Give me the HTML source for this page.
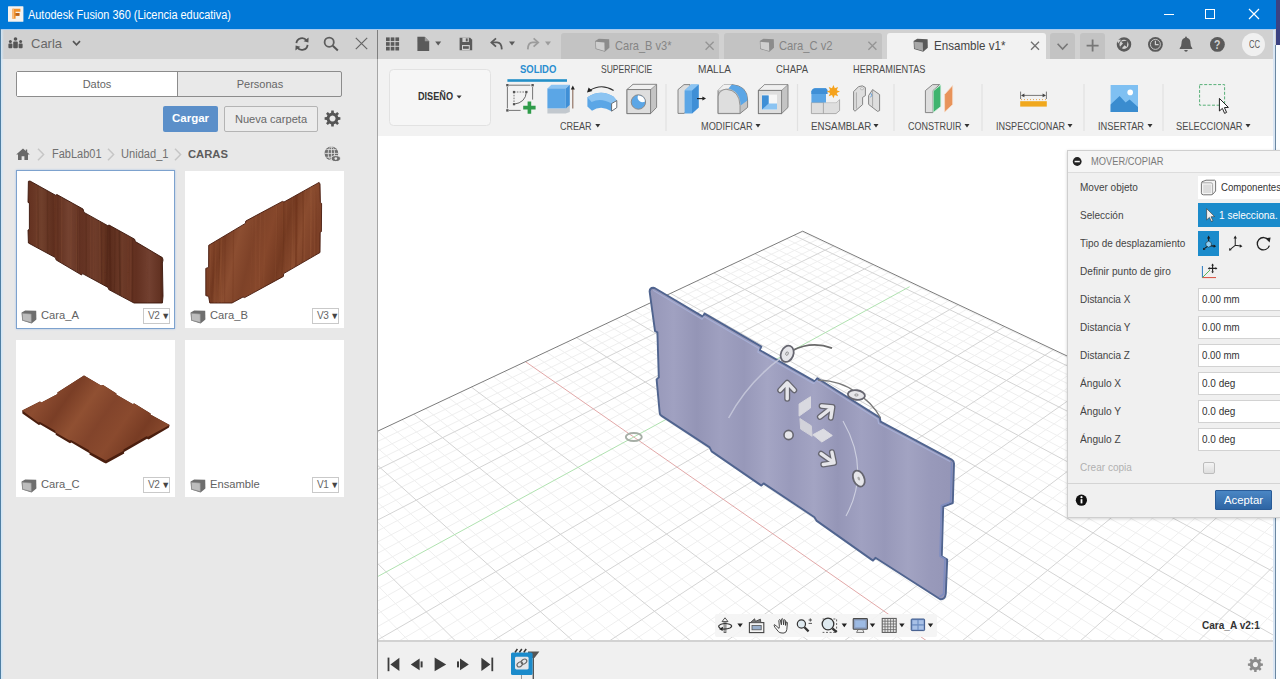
<!DOCTYPE html>
<html lang="es"><head><meta charset="utf-8"><title>Autodesk Fusion 360</title>
<style>*{box-sizing:border-box;margin:0;padding:0}
html,body{width:1280px;height:679px;overflow:hidden;background:#fff;font-family:"Liberation Sans",sans-serif;font-size:12px;color:#3c3c3c}
.abs{position:absolute}
svg{position:absolute;overflow:visible}
.nw{white-space:nowrap}
#titlebar{left:0;top:0;width:1276px;height:29px;background:#0078d7}
#titlebar .t{left:28px;top:7px;color:#fff;font-size:12px;white-space:nowrap}
#lp{left:0;top:59px;width:378px;height:620px;background:#e8e8e8}
#lph{left:0;top:29px;width:1276px;height:30px;background:#d1d1d1}
#ribbon{left:378px;top:59px;width:898px;height:77px;background:#f2f2f2}
#vp{left:378px;top:136px;width:898px;height:505px;background:#fff;overflow:hidden}
#tl{left:378px;top:640px;width:898px;height:39px;background:#f0f0f0;border-top:2px solid #d2d2d2}
#rightstrip{left:1276px;top:0;width:4px;height:679px;background:#fff}
</style></head>
<body>
<div id="titlebar" class="abs"></div>
<span class="abs nw" style="left:28.0px;top:7.6px;font-size:12px;line-height:14px;color:#fff;transform-origin:0 50%;transform:scaleX(0.911);">Autodesk Fusion 360 (Licencia educativa)</span>
<div id="lph" class="abs"></div>
<div id="lp" class="abs"></div>
<div id="ribbon" class="abs"></div>
<div id="rightstrip" class="abs"></div>
<svg style="left:8px;top:37px" width="15" height="12" viewBox="0 0 15 12"><g fill="#555">
<circle cx="2.4" cy="4.4" r="1.5"/><rect x="0.4" y="6.6" width="4" height="4.6" rx="1"/>
<circle cx="7.5" cy="2" r="1.8"/><rect x="5.2" y="4.6" width="4.6" height="6.6" rx="1"/>
<circle cx="12.6" cy="4.4" r="1.5"/><rect x="10.6" y="6.6" width="4" height="4.6" rx="1"/></g></svg>
<span class="abs nw" style="left:31px;top:36px;font-size:13px;color:#686868">Carla</span>
<svg style="left:72px;top:40px" width="9" height="7" viewBox="0 0 9 7"><path d="M1 1.2 L4.5 4.8 L8 1.2" fill="none" stroke="#555" stroke-width="1.7"/></svg>
<svg style="left:294px;top:36px" width="16" height="16" viewBox="0 0 16 16"><g fill="none" stroke="#555" stroke-width="1.8">
<path d="M2.4 7.2 A5.6 5.6 0 0 1 12.6 4.6"/><path d="M13.6 8.8 A5.6 5.6 0 0 1 3.4 11.4"/></g>
<path d="M14.6 1.4 L14.4 6.6 L9.6 5.2 Z" fill="#555"/><path d="M1.4 14.6 L1.6 9.4 L6.4 10.8 Z" fill="#555"/></svg>
<svg style="left:323px;top:36px" width="16" height="16" viewBox="0 0 16 16"><circle cx="6.2" cy="6.2" r="4.6" fill="none" stroke="#5e5e5e" stroke-width="1.8"/><path d="M9.8 9.8 L14.8 14.4" stroke="#555" stroke-width="2"/></svg>
<svg style="left:355px;top:37px" width="13" height="13" viewBox="0 0 13 13"><path d="M0.8 0.8 L12.2 12.2 M12.2 0.8 L0.8 12.2" stroke="#666" stroke-width="1.2"/></svg>
<div class="abs" style="left:16px;top:71px;width:326px;height:26px;border:1px solid #8c8c8c;border-radius:2px;background:#e9e9e9"></div>
<div class="abs" style="left:17px;top:72px;width:161px;height:24px;background:#fff;border-right:1px solid #8c8c8c;text-align:center;line-height:24px;font-size:11px;color:#666">Datos</div>
<div class="abs" style="left:179px;top:72px;width:162px;height:24px;text-align:center;line-height:24px;font-size:11px;color:#666">Personas</div>
<div class="abs" style="left:163px;top:106px;width:55px;height:26px;background:#5b8fc9;border-radius:2px;color:#fff;font-weight:bold;font-size:11.5px;text-align:center;line-height:25px">Cargar</div>
<div class="abs" style="left:224px;top:106px;width:94px;height:26px;background:#ececec;border:1px solid #b4b4b4;border-radius:2px;color:#686868;font-size:11.1px;text-align:center;line-height:24px">Nueva carpeta</div>
<svg style="left:324px;top:110px" width="17" height="17" viewBox="0 0 17 17"><path d="M14.26,7.12 L16.40,7.25 L16.40,9.75 L14.26,9.88 L13.55,11.59 L14.97,13.20 L13.20,14.97 L11.59,13.55 L9.88,14.26 L9.75,16.40 L7.25,16.40 L7.12,14.26 L5.41,13.55 L3.80,14.97 L2.03,13.20 L3.45,11.59 L2.74,9.88 L0.60,9.75 L0.60,7.25 L2.74,7.12 L3.45,5.41 L2.03,3.80 L3.80,2.03 L5.41,3.45 L7.12,2.74 L7.25,0.60 L9.75,0.60 L9.88,2.74 L11.59,3.45 L13.20,2.03 L14.97,3.80 L13.55,5.41Z M8.50 5.46 a3.04 3.04 0 1 0 0.01 0Z" fill="#555" fill-rule="evenodd"/><circle cx="8.5" cy="8.5" r="4.6" fill="none" stroke="#555" stroke-width="1.6"/></svg>
<svg style="left:15px;top:147px" width="16" height="14" viewBox="0 0 16 14"><path d="M8 1.6 L1.2 7.6 L3 7.6 L3 13 L6.6 13 L6.6 9.2 L9.4 9.2 L9.4 13 L13 13 L13 7.6 L14.8 7.6 L12.2 5.2 L12.2 2.6 L10.8 2.6 L10.8 4 Z" fill="#686868"/></svg>
<svg style="left:37px;top:148px" width="8" height="13" viewBox="0 0 8 13"><path d="M1 0.8 L6.6 6.5 L1 12.2" fill="none" stroke="#c6c6c6" stroke-width="1.5"/></svg>
<svg style="left:107px;top:148px" width="8" height="13" viewBox="0 0 8 13"><path d="M1 0.8 L6.6 6.5 L1 12.2" fill="none" stroke="#c6c6c6" stroke-width="1.5"/></svg>
<svg style="left:174px;top:148px" width="8" height="13" viewBox="0 0 8 13"><path d="M1 0.8 L6.6 6.5 L1 12.2" fill="none" stroke="#c6c6c6" stroke-width="1.5"/></svg>
<span class="abs nw" style="left:51.5px;top:147.2px;font-size:12px;line-height:14px;color:#707070;transform-origin:0 50%;transform:scaleX(0.916);">FabLab01</span>
<span class="abs nw" style="left:121.0px;top:147.2px;font-size:12px;line-height:14px;color:#707070;transform-origin:0 50%;transform:scaleX(0.925);">Unidad_1</span>
<span class="abs nw" style="left:187.5px;top:147.2px;font-size:11.5px;line-height:14px;color:#5c5c5c;font-weight:bold;transform-origin:0 50%;transform:scaleX(0.978);">CARAS</span>
<svg style="left:324px;top:146px" width="17" height="17" viewBox="0 0 17 17"><circle cx="7.4" cy="7.4" r="6.8" fill="#6e6e6e"/>
<path d="M7.4 0.6 V14.2 M0.6 7.4 H14.2 M2.4 3.6 H12.4 M2.4 11.2 H12.4" stroke="#e8e8e8" stroke-width="0.8" fill="none"/><ellipse cx="7.4" cy="7.4" rx="3.2" ry="6.8" fill="none" stroke="#e8e8e8" stroke-width="0.8"/>
<ellipse cx="11.8" cy="12.6" rx="4.6" ry="3" fill="#6e6e6e" stroke="#e8e8e8" stroke-width="1"/><circle cx="11.8" cy="12.6" r="1.3" fill="#e8e8e8"/></svg>
<div class="abs" style="left:16px;top:170px;width:159px;height:159px;background:#fff;border:1px solid #7da2ce;box-shadow:0 0 2px #a8c4e6"></div><svg style="left:21px;top:310px" width="16" height="14" viewBox="0 0 16 14"><path d="M0.6 2.6 L4.2 0.4 L15.2 0.8 L15.4 9.6 L10.6 13.4 L1.2 10.6 Z" fill="#6e6e6e"/><path d="M1.2 3.2 L10.2 4 L10.4 12.6 L1.6 10.2 Z" fill="#bdbdbd"/><path d="M1.2 3.2 L10.2 4 L10.4 12.6 L1.6 10.2 Z" fill="none" stroke="#8a8a8a" stroke-width="0.6"/></svg><span class="abs nw" style="left:41px;top:309px;font-size:11.2px;color:#626262">Cara_A</span><div class="abs nw" style="left:143px;top:308px;width:27px;height:16px;border:1px solid #c9c9c9;background:#fff;font-size:10px;color:#666;line-height:14px;padding-left:4px;letter-spacing:-0.5px">V2<span style="font-size:9px;color:#444;margin-left:2px">&#9660;</span></div>
<div class="abs" style="left:185px;top:171px;width:159px;height:157px;background:#fff"></div><svg style="left:190px;top:310px" width="16" height="14" viewBox="0 0 16 14"><path d="M0.6 2.6 L4.2 0.4 L15.2 0.8 L15.4 9.6 L10.6 13.4 L1.2 10.6 Z" fill="#6e6e6e"/><path d="M1.2 3.2 L10.2 4 L10.4 12.6 L1.6 10.2 Z" fill="#bdbdbd"/><path d="M1.2 3.2 L10.2 4 L10.4 12.6 L1.6 10.2 Z" fill="none" stroke="#8a8a8a" stroke-width="0.6"/></svg><span class="abs nw" style="left:210px;top:309px;font-size:11.2px;color:#626262">Cara_B</span><div class="abs nw" style="left:312px;top:308px;width:27px;height:16px;border:1px solid #c9c9c9;background:#fff;font-size:10px;color:#666;line-height:14px;padding-left:4px;letter-spacing:-0.5px">V3<span style="font-size:9px;color:#444;margin-left:2px">&#9660;</span></div>
<div class="abs" style="left:16px;top:340px;width:159px;height:157px;background:#fff"></div><svg style="left:21px;top:479px" width="16" height="14" viewBox="0 0 16 14"><path d="M0.6 2.6 L4.2 0.4 L15.2 0.8 L15.4 9.6 L10.6 13.4 L1.2 10.6 Z" fill="#6e6e6e"/><path d="M1.2 3.2 L10.2 4 L10.4 12.6 L1.6 10.2 Z" fill="#bdbdbd"/><path d="M1.2 3.2 L10.2 4 L10.4 12.6 L1.6 10.2 Z" fill="none" stroke="#8a8a8a" stroke-width="0.6"/></svg><span class="abs nw" style="left:41px;top:478px;font-size:11.2px;color:#626262">Cara_C</span><div class="abs nw" style="left:143px;top:477px;width:27px;height:16px;border:1px solid #c9c9c9;background:#fff;font-size:10px;color:#666;line-height:14px;padding-left:4px;letter-spacing:-0.5px">V2<span style="font-size:9px;color:#444;margin-left:2px">&#9660;</span></div>
<div class="abs" style="left:185px;top:340px;width:159px;height:157px;background:#fff"></div><svg style="left:190px;top:479px" width="16" height="14" viewBox="0 0 16 14"><path d="M0.6 2.6 L4.2 0.4 L15.2 0.8 L15.4 9.6 L10.6 13.4 L1.2 10.6 Z" fill="#6e6e6e"/><path d="M1.2 3.2 L10.2 4 L10.4 12.6 L1.6 10.2 Z" fill="#bdbdbd"/><path d="M1.2 3.2 L10.2 4 L10.4 12.6 L1.6 10.2 Z" fill="none" stroke="#8a8a8a" stroke-width="0.6"/></svg><span class="abs nw" style="left:210px;top:478px;font-size:11.2px;color:#626262">Ensamble</span><div class="abs nw" style="left:312px;top:477px;width:27px;height:16px;border:1px solid #c9c9c9;background:#fff;font-size:10px;color:#666;line-height:14px;padding-left:4px;letter-spacing:-0.5px">V1<span style="font-size:9px;color:#444;margin-left:2px">&#9660;</span></div>
<svg style="left:0;top:0" width="378" height="679" viewBox="0 0 378 679"><defs><linearGradient id="wA" x1="0" y1="0" x2="1" y2="0"><stop offset="0.000" stop-color="#63301f"/><stop offset="0.100" stop-color="#70402c"/><stop offset="0.200" stop-color="#5c2c1c"/><stop offset="0.300" stop-color="#744230"/><stop offset="0.400" stop-color="#633222"/><stop offset="0.500" stop-color="#6e3c2a"/><stop offset="0.600" stop-color="#5a2c1c"/><stop offset="0.700" stop-color="#6c3a28"/><stop offset="0.800" stop-color="#623020"/><stop offset="0.900" stop-color="#724030"/><stop offset="1.000" stop-color="#5e2e1e"/></linearGradient><linearGradient id="wB" x1="0" y1="0" x2="1" y2="0.25"><stop offset="0.000" stop-color="#7c4027"/><stop offset="0.125" stop-color="#88492d"/><stop offset="0.250" stop-color="#763c23"/><stop offset="0.375" stop-color="#8c4e31"/><stop offset="0.500" stop-color="#7e4228"/><stop offset="0.625" stop-color="#86472b"/><stop offset="0.750" stop-color="#743a21"/><stop offset="0.875" stop-color="#8a4c2f"/><stop offset="1.000" stop-color="#7c4027"/></linearGradient><linearGradient id="wC" x1="0" y1="0.2" x2="1" y2="0.6"><stop offset="0.000" stop-color="#80422a"/><stop offset="0.143" stop-color="#8c4c30"/><stop offset="0.286" stop-color="#7a3e26"/><stop offset="0.429" stop-color="#905032"/><stop offset="0.571" stop-color="#82442b"/><stop offset="0.714" stop-color="#8a4a2e"/><stop offset="0.857" stop-color="#783c24"/><stop offset="1.000" stop-color="#8a4b2e"/></linearGradient><clipPath id="cA"><path d="M28.4 181.3 L30 181 L55.5 195.2 L57 194.6 L83 209 L84 212.4 L107.8 225.7 L109 225 L134.6 239.2 L135.4 241.6 L162.4 257.6 L163 260 L162.4 263 L163 296 L162.4 303 L134 303 L108.8 289.6 L108 287.4 L82.5 273.6 L81.6 275 L56.2 260 L55.4 257.6 L28.4 243 L28 230 L29.4 229.4 L29.4 203 L28 202.4 Z"/></clipPath><clipPath id="cB"><path d="M319.1 182.4 L320 184 L320.4 202.6 L321.6 203.4 L321.4 231.6 L320.2 232.4 L320 252.5 L283.6 273.6 L283.4 276.4 L244.6 297.6 L243 297 L232 303 L209.8 303 L208.6 296.4 L205.8 295.6 L205.8 268.4 L208.6 267.4 L208.7 245.3 L245.4 223.4 L245.8 221 L282.4 201.4 L284 202 Z"/></clipPath></defs><path d="M28.4 181.3 L30 181 L55.5 195.2 L57 194.6 L83 209 L84 212.4 L107.8 225.7 L109 225 L134.6 239.2 L135.4 241.6 L162.4 257.6 L163 260 L162.4 263 L163 296 L162.4 303 L134 303 L108.8 289.6 L108 287.4 L82.5 273.6 L81.6 275 L56.2 260 L55.4 257.6 L28.4 243 L28 230 L29.4 229.4 L29.4 203 L28 202.4 Z" fill="url(#wA)" stroke="#3a150a" stroke-width="0.9"/><path d="M319.1 182.4 L320 184 L320.4 202.6 L321.6 203.4 L321.4 231.6 L320.2 232.4 L320 252.5 L283.6 273.6 L283.4 276.4 L244.6 297.6 L243 297 L232 303 L209.8 303 L208.6 296.4 L205.8 295.6 L205.8 268.4 L208.6 267.4 L208.7 245.3 L245.4 223.4 L245.8 221 L282.4 201.4 L284 202 Z" fill="url(#wB)" stroke="#45190c" stroke-width="0.9"/><path d="M22.2 410.5 L40 401.6 L41.4 402.4 L57.6 394 L57.4 392.6 L84 375.5 L101 385.4 L103 385 L116.4 393.4 L116.2 394.6 L132.6 404 L134.4 403.6 L150.6 413.4 L150.4 414.6 L169.6 425 L169 427.6 L148.6 439.4 L147 438.8 L124 452 L124.2 453.4 L106 463.4 L103.6 462.6 L89.4 454.6 L89.6 453.2 L71.4 442.6 L70 443.2 L55.6 434.8 L55.8 433.4 L40.4 424.4 L38.8 425 L22.4 413.6 Z" fill="#4a1e0e"/><path d="M22.2 410.5 L40 401.6 L41.4 402.4 L57.6 394 L57.4 392.6 L84 375.5 L101 385.4 L103 385 L116.4 393.4 L116.2 394.6 L132.6 404 L134.4 403.6 L150.6 413.4 L150.4 414.6 L169.6 425 L148 436.8 L146.4 436.2 L123.4 449.4 L123.6 450.8 L105.8 460.6 L89 451.6 L89.2 450.2 L71 440 L69.6 440.6 L55.2 432.2 L55.4 430.8 L40 422 L38.4 422.6 Z" fill="url(#wC)"/><g clip-path="url(#cA)"><path d="M71.7 178 q-0.4 60 -1.4 128" stroke="#8a5238" stroke-width="1.6" opacity="0.20" fill="none"/><path d="M106.7 178 q-1.9 60 -0.2 128" stroke="#8a5238" stroke-width="0.7" opacity="0.20" fill="none"/><path d="M85.3 178 q1.8 60 0.4 128" stroke="#3e1a0c" stroke-width="1.3" opacity="0.19" fill="none"/><path d="M107.0 178 q1.9 60 -1.4 128" stroke="#3e1a0c" stroke-width="1.6" opacity="0.24" fill="none"/><path d="M47.5 178 q0.3 60 0.2 128" stroke="#3e1a0c" stroke-width="1.4" opacity="0.20" fill="none"/><path d="M105.1 178 q-0.5 60 0.1 128" stroke="#8a5238" stroke-width="0.7" opacity="0.19" fill="none"/><path d="M55.8 178 q1.1 60 -0.1 128" stroke="#7c4630" stroke-width="1.7" opacity="0.26" fill="none"/><path d="M61.5 178 q0.8 60 -0.8 128" stroke="#8a5238" stroke-width="1.3" opacity="0.30" fill="none"/><path d="M146.1 178 q-0.8 60 1.4 128" stroke="#7c4630" stroke-width="0.7" opacity="0.27" fill="none"/><path d="M130.2 178 q1.7 60 -0.2 128" stroke="#8a5238" stroke-width="1.8" opacity="0.20" fill="none"/><path d="M103.3 178 q-0.6 60 -0.4 128" stroke="#4a2012" stroke-width="1.2" opacity="0.36" fill="none"/><path d="M37.3 178 q1.8 60 -0.1 128" stroke="#3e1a0c" stroke-width="1.4" opacity="0.19" fill="none"/><path d="M122.7 178 q-0.9 60 -0.3 128" stroke="#7c4630" stroke-width="1.4" opacity="0.18" fill="none"/><path d="M90.3 178 q0.4 60 -0.0 128" stroke="#8a5238" stroke-width="0.9" opacity="0.24" fill="none"/><path d="M127.7 178 q-0.4 60 1.1 128" stroke="#7c4630" stroke-width="0.7" opacity="0.28" fill="none"/><path d="M102.2 178 q1.3 60 1.1 128" stroke="#8a5238" stroke-width="0.9" opacity="0.27" fill="none"/><path d="M76.4 178 q1.8 60 -1.0 128" stroke="#7c4630" stroke-width="0.8" opacity="0.23" fill="none"/><path d="M59.5 178 q1.3 60 -1.0 128" stroke="#7c4630" stroke-width="0.9" opacity="0.21" fill="none"/><path d="M100.2 178 q1.8 60 0.6 128" stroke="#4a2012" stroke-width="1.2" opacity="0.32" fill="none"/><path d="M119.3 178 q-0.2 60 1.1 128" stroke="#3e1a0c" stroke-width="1.7" opacity="0.33" fill="none"/><path d="M103.5 178 q-0.4 60 -1.2 128" stroke="#7c4630" stroke-width="1.4" opacity="0.19" fill="none"/><path d="M37.1 178 q-0.2 60 -1.2 128" stroke="#8a5238" stroke-width="1.3" opacity="0.20" fill="none"/><path d="M104.5 178 q1.8 60 0.3 128" stroke="#3e1a0c" stroke-width="0.7" opacity="0.23" fill="none"/><path d="M78.8 178 q1.8 60 0.3 128" stroke="#4a2012" stroke-width="1.2" opacity="0.21" fill="none"/><path d="M93.9 178 q-0.1 60 -0.6 128" stroke="#7c4630" stroke-width="0.8" opacity="0.34" fill="none"/><path d="M127.9 178 q1.3 60 -1.0 128" stroke="#7c4630" stroke-width="0.6" opacity="0.39" fill="none"/><path d="M99.3 178 q0.8 60 1.2 128" stroke="#8a5238" stroke-width="1.5" opacity="0.25" fill="none"/><path d="M114.8 178 q0.8 60 -0.7 128" stroke="#3e1a0c" stroke-width="1.0" opacity="0.22" fill="none"/><path d="M132.2 178 q0.5 60 0.3 128" stroke="#4a2012" stroke-width="1.5" opacity="0.35" fill="none"/><path d="M54.3 178 q1.3 60 0.7 128" stroke="#8a5238" stroke-width="0.9" opacity="0.29" fill="none"/><path d="M76.0 178 q2.0 60 0.9 128" stroke="#3e1a0c" stroke-width="1.2" opacity="0.22" fill="none"/><path d="M109.7 178 q-0.2 60 1.3 128" stroke="#4a2012" stroke-width="1.8" opacity="0.39" fill="none"/><path d="M77.2 178 q-1.6 60 -0.1 128" stroke="#8a5238" stroke-width="1.0" opacity="0.29" fill="none"/><path d="M161.0 178 q-0.1 60 0.5 128" stroke="#3e1a0c" stroke-width="1.6" opacity="0.20" fill="none"/></g><g clip-path="url(#cB)"><path d="M281.9 178 q1.7 60 -1.0 128" stroke="#965636" stroke-width="1.3" opacity="0.19" fill="none"/><path d="M297.1 178 q-2.5 60 -0.2 128" stroke="#6a3018" stroke-width="1.6" opacity="0.24" fill="none"/><path d="M291.7 178 q1.3 60 -3.3 128" stroke="#5e2a14" stroke-width="0.8" opacity="0.18" fill="none"/><path d="M310.8 178 q0.7 60 -1.6 128" stroke="#a0603e" stroke-width="1.3" opacity="0.34" fill="none"/><path d="M222.4 178 q-2.9 60 -0.8 128" stroke="#a0603e" stroke-width="1.6" opacity="0.17" fill="none"/><path d="M292.4 178 q-0.4 60 -0.5 128" stroke="#a0603e" stroke-width="1.8" opacity="0.19" fill="none"/><path d="M233.7 178 q0.0 60 -0.9 128" stroke="#6a3018" stroke-width="1.1" opacity="0.26" fill="none"/><path d="M302.4 178 q2.5 60 -2.6 128" stroke="#5e2a14" stroke-width="1.2" opacity="0.27" fill="none"/><path d="M310.7 178 q2.0 60 -0.5 128" stroke="#965636" stroke-width="0.8" opacity="0.18" fill="none"/><path d="M264.2 178 q1.7 60 -1.6 128" stroke="#965636" stroke-width="1.7" opacity="0.18" fill="none"/><path d="M220.7 178 q0.3 60 -2.7 128" stroke="#5e2a14" stroke-width="1.3" opacity="0.26" fill="none"/><path d="M296.5 178 q2.3 60 -3.8 128" stroke="#5e2a14" stroke-width="0.9" opacity="0.16" fill="none"/><path d="M215.5 178 q0.4 60 -1.0 128" stroke="#965636" stroke-width="1.9" opacity="0.24" fill="none"/><path d="M276.3 178 q1.2 60 -2.2 128" stroke="#a0603e" stroke-width="1.3" opacity="0.25" fill="none"/><path d="M315.1 178 q2.5 60 -0.4 128" stroke="#6a3018" stroke-width="0.9" opacity="0.24" fill="none"/><path d="M253.2 178 q-0.3 60 -3.7 128" stroke="#965636" stroke-width="0.9" opacity="0.16" fill="none"/><path d="M283.0 178 q2.4 60 -3.4 128" stroke="#5e2a14" stroke-width="1.6" opacity="0.28" fill="none"/><path d="M220.9 178 q2.8 60 -3.1 128" stroke="#a0603e" stroke-width="1.9" opacity="0.23" fill="none"/><path d="M261.5 178 q-2.0 60 -2.3 128" stroke="#a0603e" stroke-width="1.3" opacity="0.22" fill="none"/><path d="M227.1 178 q-2.4 60 -2.5 128" stroke="#6a3018" stroke-width="1.1" opacity="0.24" fill="none"/><path d="M287.0 178 q-1.0 60 -1.5 128" stroke="#965636" stroke-width="1.3" opacity="0.16" fill="none"/><path d="M320.2 178 q2.8 60 -3.6 128" stroke="#a0603e" stroke-width="1.0" opacity="0.16" fill="none"/><path d="M295.9 178 q1.5 60 -0.7 128" stroke="#6a3018" stroke-width="1.8" opacity="0.29" fill="none"/><path d="M315.6 178 q-2.1 60 -0.3 128" stroke="#965636" stroke-width="1.4" opacity="0.29" fill="none"/><path d="M214.6 178 q1.8 60 -3.3 128" stroke="#5e2a14" stroke-width="1.9" opacity="0.20" fill="none"/><path d="M206.0 178 q1.8 60 -3.7 128" stroke="#5e2a14" stroke-width="1.8" opacity="0.16" fill="none"/><path d="M305.8 178 q-2.9 60 -0.0 128" stroke="#965636" stroke-width="1.2" opacity="0.33" fill="none"/><path d="M277.4 178 q0.2 60 -3.0 128" stroke="#5e2a14" stroke-width="0.8" opacity="0.18" fill="none"/><path d="M209.9 178 q2.6 60 -1.5 128" stroke="#a0603e" stroke-width="1.3" opacity="0.19" fill="none"/><path d="M256.6 178 q-1.4 60 -0.8 128" stroke="#a0603e" stroke-width="2.0" opacity="0.16" fill="none"/></g></svg>
<div class="abs" style="left:0;top:29px;width:1px;height:650px;background:#4f7fa3"></div>
<div class="abs" style="left:1px;top:30px;width:3px;height:649px;background:linear-gradient(90deg,#cfe6f8,rgba(220,232,240,0))"></div>
<div class="abs" style="left:377px;top:59px;width:1px;height:620px;background:#a6a6a6"></div>
<div class="abs" style="left:377px;top:30px;width:1px;height:29px;background:#7e7e7e"></div>
<div class="abs" style="left:1px;top:29px;width:1273px;height:1px;background:#a9cbee"></div>
<div class="abs" style="left:561px;top:33px;width:158px;height:26px;background:#c3c3c3;border-radius:3px 3px 0 0"></div>
<div class="abs" style="left:724px;top:33px;width:158px;height:26px;background:#c3c3c3;border-radius:3px 3px 0 0"></div>
<div class="abs" style="left:887px;top:33px;width:159px;height:26px;background:#f2f2f2;border-radius:3px 3px 0 0"></div>
<div class="abs" style="left:1050px;top:33px;width:25px;height:26px;background:#c3c3c3;border-radius:3px 3px 0 0"></div>
<div class="abs" style="left:1080px;top:33px;width:25px;height:26px;background:#c3c3c3;border-radius:3px 3px 0 0"></div>
<span class="abs nw" style="left:614.5px;top:38.0px;font-size:13px;line-height:16px;color:#858585;transform-origin:0 50%;transform:scaleX(0.850);">Cara_B v3*</span>
<span class="abs nw" style="left:779.0px;top:38.0px;font-size:13px;line-height:16px;color:#858585;transform-origin:0 50%;transform:scaleX(0.861);">Cara_C v2</span>
<span class="abs nw" style="left:933.5px;top:38.0px;font-size:13px;line-height:16px;color:#444;transform-origin:0 50%;transform:scaleX(0.891);">Ensamble v1*</span>
<div class="abs" style="left:1242px;top:33px;width:23px;height:23px;border-radius:12px;background:#f0f0f0"></div>
<span class="abs nw" style="left:1248.5px;top:38.5px;font-size:10px;line-height:12px;color:#555;transform-origin:0 50%;transform:scaleX(0.762);">CC</span>
<svg style="left:0;top:0" width="1280" height="140" viewBox="0 0 1280 140"><rect x="386.0" y="37.4" width="3.7" height="3.7" fill="#5a5a5a"/><rect x="386.0" y="42.1" width="3.7" height="3.7" fill="#5a5a5a"/><rect x="386.0" y="46.8" width="3.7" height="3.7" fill="#5a5a5a"/><rect x="390.7" y="37.4" width="3.7" height="3.7" fill="#5a5a5a"/><rect x="390.7" y="42.1" width="3.7" height="3.7" fill="#5a5a5a"/><rect x="390.7" y="46.8" width="3.7" height="3.7" fill="#5a5a5a"/><rect x="395.4" y="37.4" width="3.7" height="3.7" fill="#5a5a5a"/><rect x="395.4" y="42.1" width="3.7" height="3.7" fill="#5a5a5a"/><rect x="395.4" y="46.8" width="3.7" height="3.7" fill="#5a5a5a"/><path d="M417.4 36.8 H424.6 L429.2 41.4 V51 H417.4 Z" fill="#5a5a5a"/><path d="M424.8 36.8 V41.2 H429.2 Z" fill="#9a9a9a"/><path d="M435.2 41.6 H441.2 L438.2 45.4 Z" fill="#5a5a5a"/><path d="M459.6 37.8 H470.2 L472.2 39.8 V50.2 H459.6 Z" fill="#5a5a5a"/><rect x="462.4" y="37.8" width="6.4" height="4.2" fill="#d1d1d1"/><rect x="465.8" y="38.4" width="1.9" height="3" fill="#5a5a5a"/><rect x="462" y="45" width="7.8" height="5.2" fill="#d1d1d1"/><rect x="463" y="46.2" width="5.8" height="2.6" fill="#5a5a5a"/><path d="M491.6 42.4 H497 Q501.6 42.6 501.8 49.4" fill="none" stroke="#5a5a5a" stroke-width="1.8"/><path d="M496 38.4 L491.4 42.4 L496 46.6" fill="none" stroke="#5a5a5a" stroke-width="1.8"/><path d="M509 41.6 H515 L512 45.4 Z" fill="#5a5a5a"/><path d="M538 42.4 H532.6 Q528 42.6 527.8 49.4" fill="none" stroke="#9c9c9c" stroke-width="1.8"/><path d="M533.6 38.4 L538.2 42.4 L533.6 46.6" fill="none" stroke="#9c9c9c" stroke-width="1.8"/><path d="M545 41.6 H551 L548 45.4 Z" fill="#9c9c9c"/><path d="M595.2 41.0 l3.6 -2.2 l10.4 0.4 l0.2 8.6 l-4.6 4 l-9.2 -2.8 Z" fill="#8c8c8c"/><path d="M595.8 41.8 l8.6 0.8 l0.2 8.4 l-8.4 -2.4 Z" fill="#cfcfcf"/><path d="M759.8 41.0 l3.6 -2.2 l10.4 0.4 l0.2 8.6 l-4.6 4 l-9.2 -2.8 Z" fill="#8c8c8c"/><path d="M760.4 41.8 l8.6 0.8 l0.2 8.4 l-8.4 -2.4 Z" fill="#cfcfcf"/><path d="M913.6 41.0 l3.6 -2.2 l10.4 0.4 l0.2 8.6 l-4.6 4 l-9.2 -2.8 Z" fill="#5a5a5a"/><path d="M914.2 41.8 l8.6 0.8 l0.2 8.4 l-8.4 -2.4 Z" fill="#a8a8a8"/><path d="M705.6 41.8 l8 8 m0 -8 l-8 8" stroke="#949494" stroke-width="1.3" fill="none"/><path d="M868.4 41.8 l8 8 m0 -8 l-8 8" stroke="#949494" stroke-width="1.3" fill="none"/><path d="M1031.0 41.8 l8 8 m0 -8 l-8 8" stroke="#707070" stroke-width="1.3" fill="none"/><path d="M1057.6 43.8 L1062.6 49 L1067.6 43.8" fill="none" stroke="#777" stroke-width="1.6"/><path d="M1086.6 45.6 H1098.6 M1092.6 39.6 V51.6" stroke="#777" stroke-width="1.8"/><circle cx="1124" cy="44.4" r="5.9" fill="none" stroke="#5a5a5a" stroke-width="2.7"/><path d="M1127.6 40.6 L1126.8 47 L1124.6 45.2 L1121.6 48.4 L1120 46.8 L1123 43.6 L1121 41.6 Z" fill="#5a5a5a"/><path d="M1116.4 39.6 l4.6 0.2 l-2.8 3.6 Z" fill="#d1d1d1"/><circle cx="1155.4" cy="44.4" r="7.4" fill="#5a5a5a"/><circle cx="1155.4" cy="44.4" r="5" fill="none" stroke="#d1d1d1" stroke-width="0.9"/><path d="M1155.4 40.8 V44.6 H1158.6" stroke="#d1d1d1" stroke-width="1.2" fill="none"/><path d="M1186 36.6 q0.9 0 0.9 1.2 q3.6 0.9 3.6 5.4 q0 3.4 1.8 5 v0.9 h-12.6 v-0.9 q1.8 -1.6 1.8 -5 q0 -4.5 3.6 -5.4 q0 -1.2 0.9 -1.2 Z" fill="#5a5a5a"/><path d="M1184.2 50 h3.6 q-0.2 1.8 -1.8 1.8 q-1.6 0 -1.8 -1.8Z" fill="#5a5a5a"/><circle cx="1217.4" cy="44.4" r="7.4" fill="#5a5a5a"/><rect x="389.5" y="69.5" width="101" height="56" rx="4" fill="#f6f6f6" stroke="#e2e2e2"/><path d="M456.6 95.4 h5 l-2.5 3.2 Z" fill="#333"/><rect x="507.4" y="79.2" width="59.6" height="2.6" fill="#2490c8"/><rect x="665.4" y="84" width="1.2" height="47" fill="#e1e1e1"/><rect x="796.9" y="84" width="1.2" height="47" fill="#e1e1e1"/><rect x="893.4" y="84" width="1.2" height="47" fill="#e1e1e1"/><rect x="981.4" y="84" width="1.2" height="47" fill="#e1e1e1"/><rect x="1083.4" y="84" width="1.2" height="47" fill="#e1e1e1"/><rect x="1162.4" y="84" width="1.2" height="47" fill="#e1e1e1"/><path d="M595.3 124 h5 l-2.5 3.4 Z" fill="#333"/><path d="M755.5 124 h5 l-2.5 3.4 Z" fill="#333"/><path d="M873.5 124 h5 l-2.5 3.4 Z" fill="#333"/><path d="M964.5 124 h5 l-2.5 3.4 Z" fill="#333"/><path d="M1067.5 124 h5 l-2.5 3.4 Z" fill="#333"/><path d="M1147.5 124 h5 l-2.5 3.4 Z" fill="#333"/><path d="M1245.5 124 h5 l-2.5 3.4 Z" fill="#333"/></svg>
<span class="abs nw" style="left:1214.2px;top:37.6px;font-size:12px;line-height:14px;color:#d1d1d1;font-weight:bold;transform-origin:0 50%;transform:scaleX(0.873);">?</span>
<span class="abs nw" style="left:417.5px;top:89.7px;font-size:10.5px;line-height:13px;color:#333;font-weight:bold;transform-origin:0 50%;transform:scaleX(0.869);">DISEÑO</span>
<span class="abs nw" style="left:519.5px;top:62.9px;font-size:10.5px;line-height:13px;color:#2a8ed0;font-weight:bold;transform-origin:0 50%;transform:scaleX(0.902);">SOLIDO</span>
<span class="abs nw" style="left:601.2px;top:62.9px;font-size:10.5px;line-height:13px;color:#4a4a4a;transform-origin:0 50%;transform:scaleX(0.814);">SUPERFICIE</span>
<span class="abs nw" style="left:697.5px;top:62.9px;font-size:10.5px;line-height:13px;color:#4a4a4a;transform-origin:0 50%;transform:scaleX(0.958);">MALLA</span>
<span class="abs nw" style="left:775.5px;top:62.9px;font-size:10.5px;line-height:13px;color:#4a4a4a;transform-origin:0 50%;transform:scaleX(0.904);">CHAPA</span>
<span class="abs nw" style="left:853.0px;top:62.9px;font-size:10.5px;line-height:13px;color:#4a4a4a;transform-origin:0 50%;transform:scaleX(0.877);">HERRAMIENTAS</span>
<span class="abs nw" style="left:560.0px;top:121.3px;font-size:10px;line-height:12px;color:#4a4a4a;transform-origin:0 50%;transform:scaleX(0.903);">CREAR</span>
<span class="abs nw" style="left:701.0px;top:121.3px;font-size:10px;line-height:12px;color:#4a4a4a;transform-origin:0 50%;transform:scaleX(0.918);">MODIFICAR</span>
<span class="abs nw" style="left:810.5px;top:121.3px;font-size:10px;line-height:12px;color:#4a4a4a;transform-origin:0 50%;transform:scaleX(0.978);">ENSAMBLAR</span>
<span class="abs nw" style="left:907.5px;top:121.3px;font-size:10px;line-height:12px;color:#4a4a4a;transform-origin:0 50%;transform:scaleX(0.900);">CONSTRUIR</span>
<span class="abs nw" style="left:995.5px;top:121.3px;font-size:10px;line-height:12px;color:#4a4a4a;transform-origin:0 50%;transform:scaleX(0.906);">INSPECCIONAR</span>
<span class="abs nw" style="left:1098.0px;top:121.3px;font-size:10px;line-height:12px;color:#4a4a4a;transform-origin:0 50%;transform:scaleX(0.927);">INSERTAR</span>
<span class="abs nw" style="left:1176.0px;top:121.3px;font-size:10px;line-height:12px;color:#4a4a4a;transform-origin:0 50%;transform:scaleX(0.928);">SELECCIONAR</span>
<svg style="left:0;top:0" width="1280" height="140" viewBox="0 0 1280 140"><path d="M509 85.2 H530.4 M507.4 87 V108.4 M532.6 87 V99.6 M509 110.4 H520.6" stroke="#666" stroke-width="0.9" fill="none"/><rect x="506.2" y="84.0" width="2.4" height="2.4" fill="#555"/><rect x="531.4" y="84.0" width="2.4" height="2.4" fill="#555"/><rect x="506.2" y="109.2" width="2.4" height="2.4" fill="#555"/><path d="M514 92 H526 M514 92 V104" stroke="#777" stroke-width="1" stroke-dasharray="1.6 1.2" fill="none"/><path d="M526.4 92 Q525.6 102.6 514 104.2" stroke="#666" stroke-width="1" fill="none"/><rect x="512.9" y="90.9" width="2.2" height="2.2" fill="#555"/><rect x="525.3" y="90.9" width="2.2" height="2.2" fill="#555"/><rect x="512.9" y="103.1" width="2.2" height="2.2" fill="#555"/><path d="M523.2 107.6 H535.6 M529.4 101.4 V113.8" stroke="#2f9c4a" stroke-width="3.6"/><path d="M547.4 108.4 H565.6 L569.8 105 V112 L565.6 113.4 H547.4 Z" fill="#c2c8ce"/><path d="M547.4 88.4 L551.4 84.8 H569.8 L565.8 88.4 Z" fill="#8cc4f2"/><rect x="547.4" y="88.4" width="18.4" height="20" fill="#5ba6e6"/><path d="M565.8 88.4 L569.8 84.8 V105 L565.8 108.4 Z" fill="#3f8fd6"/><path d="M572.8 88.6 V108.6" stroke="#8a6a5a" stroke-width="1.1"/><path d="M570.8 89.6 L572.8 85.4 L574.8 89.6 Z" fill="#222"/><path d="M587.4 97.2 Q601 88.6 613.4 96.6 L616.8 100.6 L616.8 107.6 L611.6 111.2 Q601 104.4 592 110.8 L587.4 106.4 Z" fill="#5ba6e6"/><path d="M587.4 97.2 Q601 88.6 613.4 96.6 L616.8 100.6 L611.6 103.6 Q601 97.4 591.6 102 Z" fill="#8cc4f2"/><path d="M611.6 103.6 L616.8 100.6 V107.6 L611.6 111.2 Z" fill="#fff" stroke="#555" stroke-width="0.8"/><path d="M589.6 90.6 Q601.4 83 613.6 90.4" stroke="#333" stroke-width="1.2" fill="none"/><path d="M587 92.6 L588.6 87.4 L592.4 91 Z" fill="#222"/><path d="M627 89.6 L633 84.4 H656.6 V107.4 L650.6 113.6 H627 Z" fill="#c4c4c4" stroke="#7a7a7a" stroke-width="0.9"/><path d="M627 89.6 L633 84.4 H656.6 L650.6 89.6 Z" fill="#f0f0f0" stroke="#7a7a7a" stroke-width="0.6"/><rect x="627" y="89.6" width="23.6" height="24" fill="#dedede" stroke="#7a7a7a" stroke-width="0.9"/><circle cx="638.4" cy="102" r="7.2" fill="#5ba6e6" stroke="#8a8a8a" stroke-width="1"/><path d="M638 95.4 A6.6 6.6 0 0 1 645 101.6 A5 5 0 0 1 638 95.4Z" fill="#fff"/><path d="M678 89.6 L684 84.6 H690 V108.6 L684 113.4 H678 Z" fill="#dedede" stroke="#7a7a7a" stroke-width="0.9"/><path d="M684.6 90.4 L691 84.6 H698.6 V107.6 L692 113.4 H684.6 Z" fill="#5ba6e6"/><path d="M692 90.4 L698.6 84.6 V107.6 L692 113.4 Z" fill="#3f8fd6"/><path d="M684.6 90.4 L691 84.6 H698.6 L692 90.4 Z" fill="#8cc4f2"/><path d="M697 98.6 H703" stroke="#222" stroke-width="1.1"/><path d="M702.4 96.6 L706 98.6 L702.4 100.6 Z" fill="#222"/><path d="M718 90.6 L724 84.6 H732 Q747.6 86 747.6 100 V107.4 L740 113.6 H718 Z" fill="#c4c4c4" stroke="#7a7a7a" stroke-width="0.9"/><path d="M718 90.6 L724 84.6 H732 L729 88 Q722 89.6 718 90.6Z" fill="#f0f0f0"/><path d="M718.2 113.4 V96 Q719.4 90 726 89.2 Q739.6 90.4 740 105.6 V113.4 Z" fill="#dedede" stroke="#7a7a7a" stroke-width="0.7"/><path d="M731.6 84.8 Q747.4 86 747.4 100.6 L740.6 105.6 Q740.2 91.6 728.6 88.6 Z" fill="#5ba6e6"/><path d="M758.4 90.4 L764.6 84.6 H788 V107.4 L781.6 113.6 H758.4 Z" fill="#c4c4c4" stroke="#7a7a7a" stroke-width="0.9"/><path d="M758.4 90.4 L764.6 84.6 H788 L781.6 90.4 Z" fill="#f0f0f0" stroke="#7a7a7a" stroke-width="0.6"/><rect x="758.4" y="90.4" width="23.2" height="23.2" fill="#dedede" stroke="#7a7a7a" stroke-width="0.9"/><rect x="762" y="94.6" width="15" height="15" fill="#f6f6f6"/><path d="M762 95.4 H768.6 V103.4 H777 V109.6 H762 Z" fill="#8cc4f2"/><path d="M762 95.4 H768.6 V103.4 L762 109.6 Z" fill="#3f8fd6"/><path d="M811.4 102.6 H836 L839.6 99.6 V110.6 L836 113.6 H811.4 Z" fill="#dedede" stroke="#9a9a9a" stroke-width="0.8"/><path d="M823.4 102.6 V113.6" stroke="#9a9a9a" stroke-width="0.8"/><path d="M823.6 102.6 L827 99.4 H839.6 L836 102.6 Z" fill="#f0f0f0"/><path d="M811.4 91.6 Q812 88.4 815.4 88.2 H826 V102.6 H811.4 Z" fill="#5ba6e6"/><path d="M811.4 91.6 Q812 88.4 815.4 88.2 H826 L827.6 90 V94 H811.4Z" fill="#3f8fd6"/><polygon points="840.0,91.6 836.7,93.0 838.1,96.3 834.8,94.9 833.4,98.2 832.0,94.9 828.7,96.3 830.1,93.0 826.8,91.6 830.1,90.2 828.7,86.9 832.0,88.3 833.4,85.0 834.8,88.3 838.1,86.9 836.7,90.2" fill="#f5a21c"/><path d="M853.6 91.6 L858.6 86.6 Q863 84.6 865.4 87.6 V95.6 L862.6 97.4 V104.6 L855 111.2 L853.6 110 Z" fill="#dedede" stroke="#7a7a7a" stroke-width="0.9"/><path d="M856.4 92.4 V108.6" stroke="#9a9a9a" stroke-width="0.8"/><ellipse cx="862" cy="88.8" rx="1.6" ry="1" fill="#fff" stroke="#888" stroke-width="0.5"/><path d="M868.6 95.6 L872.6 89.6 L879.6 94.6 V110.6 L877.6 111.4 L868.6 104.4 Z" fill="#dedede" stroke="#7a7a7a" stroke-width="0.9"/><path d="M872.6 89.6 V106.6" stroke="#9a9a9a" stroke-width="0.8"/><path d="M870.6 93 l1.4 2.6 l-1.8 1.6" stroke="#5a9ad8" stroke-width="0.9" fill="none"/><path d="M925.4 90.6 L932.6 84.6 H939.6 L933 90.6 V112.6 H925.4 Z" fill="#dedede" stroke="#7a7a7a" stroke-width="0.9"/><path d="M933.2 91 L940.8 84.8 V106.6 L933.2 112.6 Z" fill="#3fb46e" stroke="#d8f0e2" stroke-width="0.7"/><path d="M944.6 94.4 L952.6 85.6 V104.6 L944.6 112 Z" fill="#e8935a" stroke="#f8dcc8" stroke-width="0.7"/><rect x="1020.2" y="101.2" width="26.6" height="5.4" fill="#f0a81e"/><path d="M1021 99.6 H1046" stroke="#e08a10" stroke-width="0.9" stroke-dasharray="0.8 2.2"/><path d="M1020.6 91.6 V99 M1046.4 91.6 V99 M1022 95.4 H1045" stroke="#666" stroke-width="0.9" fill="none"/><path d="M1021 95.4 l3.4 -1.8 v3.6 Z M1046 95.4 l-3.4 -1.8 v3.6 Z" fill="#444"/><rect x="1110.6" y="85" width="27.4" height="27" fill="#7fc0f2"/><path d="M1110.6 104.6 L1119.6 96 L1125.6 102.6 L1129.6 99.6 L1138 107 V112 H1110.6 Z" fill="#3a8ccf"/><circle cx="1130.2" cy="92.4" r="2.8" fill="#fff"/><rect x="1199.6" y="84.6" width="25" height="20.6" fill="none" stroke="#58b078" stroke-width="1" stroke-dasharray="3 1.6"/><path d="M1219.4 98.4 V111 L1222.4 108.4 L1224.6 113.4 L1226.6 112.4 L1224.4 107.6 L1228.4 107.4 Z" fill="#fff" stroke="#222" stroke-width="1"/></svg>
<div id="vp" class="abs"><svg style="left:0;top:0" width="898" height="505" viewBox="0 0 898 505"><g fill="none"><path d="M-308.8 452.2 L433.2 99.3 M-303.4 460.2 L440.7 102.8 M-297.8 468.3 L448.2 106.3 M-286.5 484.8 L463.5 113.5 M-280.7 493.3 L471.3 117.2 M-274.8 501.9 L479.1 120.9 M-268.9 510.6 L487.1 124.7 M-256.6 528.5 L503.2 132.3 M-250.3 537.7 L511.4 136.1 M-243.9 547.0 L519.7 140.1 M-237.4 556.5 L528.0 144.0 M-224.1 576.0 L545.1 152.0 M-217.3 586.0 L553.7 156.1 M-210.4 596.1 L562.5 160.3 M-203.3 606.4 L571.3 164.4 M-188.8 627.6 L589.3 172.9 M-181.3 638.5 L598.4 177.2 M-173.8 649.6 L607.7 181.6 M-166.0 660.9 L617.0 186.0 M-150.2 684.1 L636.1 195.0 M-142.0 696.0 L645.8 199.6 M-133.7 708.2 L655.6 204.2 M-125.2 720.6 L665.5 208.9 M-107.8 746.1 L685.7 218.4 M-98.8 759.2 L696.0 223.3 M-89.6 772.6 L706.4 228.2 M-80.3 786.2 L716.9 233.2 M-61.0 814.4 L738.4 243.3 M-51.1 828.9 L749.3 248.5 M-40.9 843.7 L760.4 253.7 M-30.6 858.8 L771.6 259.0 M-9.2 890.1 L794.4 269.8 M1.8 906.2 L806.0 275.2 M13.1 922.7 L817.8 280.8 M24.6 939.5 L829.8 286.4 M48.5 974.4 L854.1 297.9 M60.9 992.4 L866.5 303.8 M73.5 1010.9 L879.1 309.7 M86.4 1029.8 L891.9 315.8 M113.2 1069.0 L917.9 328.1 M127.1 1089.3 L931.2 334.3 M141.4 1110.1 L944.6 340.7 M155.9 1131.4 L958.3 347.1 M186.3 1175.7 L986.2 360.3 M202.0 1198.8 L1000.4 367.0 M218.2 1222.4 L1014.9 373.8 M234.8 1246.7 L1029.5 380.7 M269.4 1297.2 L1059.4 394.9 M287.4 1323.5 L1074.7 402.1 M306.0 1350.6 L1090.3 409.4 M325.0 1378.5 L1106.0 416.9 M364.8 1436.7 L1138.3 432.1 M385.6 1467.1 L1154.8 439.9 M407.1 1498.4 L1171.5 447.8 M429.2 1530.7 L1188.5 455.8 M475.5 1598.4 L1223.3 472.2 M499.8 1633.9 L1241.1 480.6 M524.9 1670.6 L1259.2 489.2 M550.9 1708.5 L1277.6 497.9 M605.5 1788.3 L1315.3 515.7 M634.2 1830.3 L1334.6 524.8 M664.0 1873.8 L1354.3 534.0 M694.9 1918.9 L1374.2 543.5 M760.1 2014.3 L1415.2 562.8 M794.7 2064.8 L1436.2 572.7 M830.6 2117.3 L1457.6 582.8 M867.9 2171.8 L1479.3 593.1 M-298.5 435.5 L927.3 2172.6 M-282.2 427.8 L947.0 2118.8 M-266.2 420.3 L966.0 2067.0 M-250.4 412.9 L984.2 2017.1 M-219.5 398.3 L1018.8 1922.6 M-204.4 391.2 L1035.1 1877.9 M-189.5 384.2 L1050.9 1834.7 M-174.8 377.3 L1066.2 1793.0 M-145.9 363.7 L1095.2 1713.7 M-131.8 357.1 L1109.0 1675.9 M-117.9 350.5 L1122.4 1639.4 M-104.1 344.0 L1135.4 1604.0 M-77.2 331.4 L1160.1 1536.4 M-64.0 325.2 L1171.9 1504.2 M-50.9 319.0 L1183.4 1472.9 M-38.0 313.0 L1194.5 1442.4 M-12.8 301.1 L1215.8 1384.2 M-0.4 295.2 L1226.0 1356.3 M11.8 289.5 L1235.9 1329.1 M23.9 283.8 L1245.6 1302.7 M47.6 272.6 L1264.2 1252.0 M59.3 267.2 L1273.1 1227.6 M70.8 261.8 L1281.8 1203.9 M82.2 256.4 L1290.3 1180.7 M104.5 245.9 L1306.6 1136.2 M115.4 240.8 L1314.4 1114.7 M126.3 235.7 L1322.1 1093.7 M137.0 230.6 L1329.6 1073.3 M158.0 220.7 L1344.0 1033.8 M168.3 215.9 L1351.0 1014.8 M178.5 211.1 L1357.8 996.1 M188.6 206.3 L1364.5 977.9 M208.5 197.0 L1377.4 942.7 M218.3 192.4 L1383.6 925.7 M227.9 187.8 L1389.7 909.0 M237.5 183.3 L1395.7 892.7 M256.2 174.5 L1407.2 861.1 M265.5 170.2 L1412.8 845.8 M274.6 165.9 L1418.3 830.8 M283.7 161.6 L1423.7 816.1 M301.4 153.3 L1434.1 787.6 M310.2 149.1 L1439.2 773.8 M318.8 145.1 L1444.1 760.2 M327.4 141.0 L1449.0 746.9 M344.3 133.1 L1458.5 721.0 M352.6 129.2 L1463.1 708.5 M360.8 125.3 L1467.6 696.1 M368.9 121.5 L1472.0 684.0 M385.0 114.0 L1480.6 660.5 M392.8 110.3 L1484.8 649.0 M400.6 106.6 L1489.0 637.7 M408.4 102.9 L1493.0 626.7 M423.6 95.8 L1500.9 605.1" stroke="#efefef" stroke-width="1"/><path d="M-292.2 476.5 L455.8 109.9 M-262.8 519.5 L495.1 128.5 M-196.1 616.9 L580.2 168.7 M-158.2 672.4 L626.5 190.5 M-116.6 733.2 L675.5 213.6 M-70.7 800.1 L727.6 238.2 M-20.0 874.3 L782.9 264.3 M36.4 956.8 L841.9 292.2 M99.7 1049.2 L904.8 321.9 M170.9 1153.3 L972.1 353.7 M251.9 1271.6 L1044.4 387.8 M344.6 1407.2 L1122.0 424.4 M452.0 1564.0 L1205.8 463.9 M577.7 1747.7 L1296.3 506.7 M726.9 1965.7 L1394.5 553.1 M906.8 2228.7 L1501.5 603.5 M-315.0 443.2 L906.8 2228.7 M-234.9 405.6 L1001.8 1969.0 M-160.3 370.5 L1081.0 1752.7 M-90.6 337.7 L1147.9 1569.7 M-25.3 307.0 L1205.3 1412.9 M35.9 278.2 L1255.0 1277.0 M93.4 251.1 L1298.5 1158.2 M198.6 201.6 L1371.0 960.1 M246.9 178.9 L1401.5 876.7 M292.6 157.4 L1429.0 801.7 M335.9 137.0 L1453.8 733.8 M377.0 117.7 L1476.4 672.1 M416.0 99.3 L1497.0 615.8" stroke="#d4d4d4" stroke-width="1"/><path d="M147.5 225.7 L1336.9 1053.3" stroke="#e2a8a8" stroke-width="1"/><path d="M-230.9 566.2 L531.6 150.7" stroke="#b0e2b0" stroke-width="1"/><path d="M-315.0 443.2 L424.7 95.2" stroke="#7c7c7c" stroke-width="1"/><path d="M424.7 95.2 L1501.5 603.5" stroke="#7c7c7c" stroke-width="1"/></g><ellipse cx="255.8" cy="301.0" rx="8" ry="4" fill="none" stroke="#a6aea6" stroke-width="1.9"/></svg><svg style="left:0;top:0" width="898" height="505" viewBox="378 136 898 505"><defs><linearGradient id="mg" x1="650" y1="0" x2="955" y2="0" gradientUnits="userSpaceOnUse"><stop offset="0.000" stop-color="#9697b8"/><stop offset="0.077" stop-color="#a0a1c1"/><stop offset="0.154" stop-color="#9495b6"/><stop offset="0.231" stop-color="#9fa0c0"/><stop offset="0.308" stop-color="#9798b9"/><stop offset="0.385" stop-color="#a4a5c4"/><stop offset="0.462" stop-color="#999abb"/><stop offset="0.538" stop-color="#a3a4c3"/><stop offset="0.615" stop-color="#9596b7"/><stop offset="0.692" stop-color="#a0a1c1"/><stop offset="0.769" stop-color="#9798b9"/><stop offset="0.846" stop-color="#a2a3c2"/><stop offset="0.923" stop-color="#9899ba"/><stop offset="1.000" stop-color="#9495b6"/></linearGradient></defs><path d="M649.6 291.4 Q649.8 288 653.2 287.8 L655 288.2 L702.8 316.6 L704.6 313.6 L761.4 346.6 L759.6 350 L814.8 381.4 L817.4 378.2 L879.8 417.6 L880.6 421.6 L951.6 459.6 Q954.2 461 954 464 L952.8 503 L943.2 506.6 L941.8 556.4 L947.2 559.6 L945.8 593.6 Q945.2 600 940.2 599.2 L875.4 557.8 L873 560.6 L816.4 520.6 L814.4 517.2 L763.6 483.4 L761.4 485.6 L711.6 451.4 L709.6 447.4 L661.2 415.6 Q659.6 414.4 659.6 412 L656.6 379.4 L658.8 377.4 L657.4 332.4 L655 331 Z" fill="url(#mg)" stroke="#50648f" stroke-width="1.9" stroke-linejoin="round"/><path d="M951.6 462 L950.6 502 L941.4 505.6 L940 556 L945 559 L943.6 594 L939 597.4" fill="none" stroke="#7f8dc0" stroke-width="1.6"/><path d="M653.2 290.4 L702 319.2 L704 316.4 L759 348.4 L757.8 352 L813.6 383.6 L816.6 380.6 L877.8 419.4 L878.6 423.4 L950 461.6" fill="none" stroke="#aab4dc" stroke-width="1.1" opacity="0.8"/><path d="M781.6 357.4 Q748 382 728.6 418" fill="none" stroke="#c8cadc" stroke-width="1.5" opacity="0.85"/><path d="M843 421 Q871 470 846 516" fill="none" stroke="#d6d8e6" stroke-width="1.1" opacity="0.85"/><path d="M792.6 350.4 Q812 340.6 832 348.2" fill="none" stroke="#6a6a6a" stroke-width="1.8"/><path d="M818 380.2 Q842 381 856 392.6 Q872 402 880.6 418" fill="none" stroke="#7a7a7a" stroke-width="1.3"/><ellipse cx="787.2" cy="353.8" rx="6.2" ry="8.4" transform="rotate(22 787.2 353.8)" fill="#e6e6ea" stroke="#666670" stroke-width="1.8"/><ellipse cx="787" cy="353.6" rx="1.2" ry="1.8" transform="rotate(22 787 353.6)" fill="none" stroke="#777" stroke-width="0.7"/><ellipse cx="856.4" cy="395" rx="8.6" ry="4.8" transform="rotate(8 856.4 395)" fill="#e6e6ea" stroke="#666670" stroke-width="1.8"/><ellipse cx="856.4" cy="395" rx="1.8" ry="1" fill="none" stroke="#777" stroke-width="0.7"/><ellipse cx="858.8" cy="478.6" rx="5.4" ry="8.4" transform="rotate(-24 858.8 478.6)" fill="#e6e6ea" stroke="#666670" stroke-width="1.8"/><ellipse cx="858.8" cy="478.6" rx="1.2" ry="2" transform="rotate(-24 858.8 478.6)" fill="#aaa"/><g transform="translate(787.2 390.2) rotate(0)"><path d="M0 8.5 L0 -7.0 M-7.0 0.0 L0 -7.5 L7.0 0.0" fill="none" stroke="#666670" stroke-width="6" stroke-linecap="round" stroke-linejoin="round"/><path d="M0 8.5 L0 -7.0 M-7.0 0.0 L0 -7.5 L7.0 0.0" fill="none" stroke="#e6e6ea" stroke-width="3.4" stroke-linecap="round" stroke-linejoin="round"/></g><g transform="translate(826.6 411.6) rotate(52)"><path d="M0 8.5 L0 -7.0 M-7.5 0.5 L0 -7.5 L7.5 0.5" fill="none" stroke="#666670" stroke-width="6" stroke-linecap="round" stroke-linejoin="round"/><path d="M0 8.5 L0 -7.0 M-7.5 0.5 L0 -7.5 L7.5 0.5" fill="none" stroke="#e6e6ea" stroke-width="3.4" stroke-linecap="round" stroke-linejoin="round"/></g><g transform="translate(828.0 458.6) rotate(125)"><path d="M0 8.5 L0 -7.0 M-7.5 0.5 L0 -7.5 L7.5 0.5" fill="none" stroke="#666670" stroke-width="6" stroke-linecap="round" stroke-linejoin="round"/><path d="M0 8.5 L0 -7.0 M-7.5 0.5 L0 -7.5 L7.5 0.5" fill="none" stroke="#e6e6ea" stroke-width="3.4" stroke-linecap="round" stroke-linejoin="round"/></g><path d="M799.1 404 L810.5 396.7 L810.5 408 L799.1 416.1 Z" fill="#d9d9e0" stroke="#d9d9e0" stroke-width="1" stroke-linejoin="round"/><path d="M799.9 418.5 L811.3 425.8 L812.1 436.3 L800.7 429.1 Z" fill="#d2d2da" stroke="#d2d2da" stroke-width="1" stroke-linejoin="round"/><path d="M812.9 434.7 L823.4 429.1 L832.3 435.5 L821.8 442 Z" fill="#dcdce2" stroke="#dcdce2" stroke-width="1" stroke-linejoin="round"/><circle cx="788.6" cy="435" r="4.6" fill="#e6e6ea" stroke="#666670" stroke-width="1.6"/></svg></div>
<div id="tl" class="abs"></div>
<div class="abs" style="left:715px;top:614px;width:222px;height:23px;background:rgba(244,244,244,0.92);border-radius:2px"></div>
<svg style="left:0;top:0" width="1280" height="679" viewBox="0 0 1280 679"><path d="M725 633 V621" stroke="#444" stroke-width="2.6"/><path d="M725 632.4 V621" stroke="#f4f4f4" stroke-width="1"/><path d="M722 621.6 L725 617.8 L728 621.6 Z" fill="#f4f4f4" stroke="#444" stroke-width="0.9"/><path d="M720.4 628.6 Q716.6 626 721 624.2 Q725 622.8 729.6 624.2 Q733.6 626 730 628 Q727.4 629.2 722.6 629" fill="none" stroke="#333" stroke-width="1.2"/><path d="M719 629 L723 626.8 L722.6 631 Z" fill="#222"/><path d="M737.4 623.6 h5.4 l-2.7 3.6 Z" fill="#222"/><rect x="749.4" y="622.6" width="14.4" height="10" fill="#f4f4f4" stroke="#444" stroke-width="1.1"/><rect x="752" y="625.4" width="9.2" height="4.4" fill="#9ab0cc" stroke="#555" stroke-width="0.8"/><path d="M750.6 622.4 L754.6 618.8 L755.4 621.4 L760.4 619.2 L760.8 622.4" fill="#777" stroke="#444" stroke-width="0.9"/><path d="M776.8 626.4 L774.4 624.6 Q773.6 625.6 775 627.4 L778.4 631.6 Q779.6 633 782 633 H784 Q786.6 632.6 786.8 629.6 L787.4 623 Q787.2 621.6 786.2 622 L785.6 625.4 L785.4 620.4 Q784.8 619 784 620.2 L783.6 624.8 L783 619.2 Q782.2 618 781.4 619.2 L781.4 624.8 L780.4 620.2 Q779.6 619 778.8 620.4 L779.4 626.6 L779 628.4 Z" fill="#f8f8f8" stroke="#333" stroke-width="0.9" stroke-linejoin="round"/><circle cx="801.4" cy="624" r="4.1" fill="#dfeaf0" stroke="#333" stroke-width="1.2"/><path d="M804.4 627.2 L808.6 631.4" stroke="#333" stroke-width="2.2"/><path d="M808.6 620 H812 M810.3 618.4 V621.6 M808.6 623.4 H812" stroke="#444" stroke-width="0.9"/><path d="M822.6 619 H836.6 V632.4 H822.6" fill="none" stroke="#555" stroke-width="0.9" stroke-dasharray="2 1.6"/><circle cx="828" cy="624" r="5.8" fill="#dfeaf0" stroke="#333" stroke-width="1.3"/><path d="M832.4 628.4 L836.6 632.2" stroke="#333" stroke-width="2.4"/><path d="M841.6 623.6 h5.4 l-2.7 3.6 Z" fill="#222"/><rect x="853.2" y="618.6" width="14.2" height="10.6" rx="0.8" fill="#8ea2c4" stroke="#4a4a4a" stroke-width="1.1"/><rect x="855.2" y="620.6" width="10.2" height="6.6" fill="#9dbbe4"/><path d="M858 629.6 H862.6 L864 632.4 H856.6 Z" fill="#f4f4f4" stroke="#555" stroke-width="0.8"/><path d="M869.8 623.6 h5.4 l-2.7 3.6 Z" fill="#222"/><rect x="882.2" y="618.4" width="14" height="14" fill="#e8e8e8" stroke="#555" stroke-width="1"/><path d="M885 618.4 V632.4 M887.8 618.4 V632.4 M890.6 618.4 V632.4 M893.4 618.4 V632.4 M882.2 621.2 H896.2 M882.2 624 H896.2 M882.2 626.8 H896.2 M882.2 629.6 H896.2" stroke="#666" stroke-width="0.8"/><path d="M899.2 623.6 h5.4 l-2.7 3.6 Z" fill="#222"/><rect x="911.2" y="619" width="13.4" height="11.6" rx="0.8" fill="#6f8fc4" stroke="#3f5a8a" stroke-width="1"/><rect x="912.4" y="620.2" width="5" height="4" fill="#a8c0e6"/><rect x="918.6" y="620.2" width="5" height="4" fill="#a8c0e6"/><rect x="912.4" y="625.6" width="5" height="4" fill="#a8c0e6"/><rect x="918.6" y="625.6" width="5" height="4" fill="#a8c0e6"/><path d="M927.8 623.6 h5.4 l-2.7 3.6 Z" fill="#222"/><rect x="387.6" y="657.6" width="1.8" height="13.6" fill="#3c3c3c"/><path d="M399.4 657.8 V671 L390.4 664.4 Z" fill="#3c3c3c"/><path d="M419.6 658.6 V670.2 L410.8 664.4 Z" fill="#3c3c3c"/><rect x="420.6" y="661.4" width="2" height="6" fill="#3c3c3c"/><path d="M434.6 657.6 V671.2 L446.2 664.4 Z" fill="#3c3c3c"/><rect x="457" y="661.4" width="2" height="6" fill="#3c3c3c"/><path d="M460 658.6 V670.2 L468.8 664.4 Z" fill="#3c3c3c"/><path d="M481.4 657.8 V671 L490.4 664.4 Z" fill="#3c3c3c"/><rect x="491.4" y="657.6" width="1.8" height="13.6" fill="#3c3c3c"/><path d="M528 651.6 H539.4 L534.4 658 H528 Z" fill="#555"/><rect x="532.6" y="656" width="1.4" height="23" fill="#555"/><rect x="521" y="674" width="1" height="5" fill="#999"/><rect x="511" y="652.4" width="21.6" height="22.6" rx="1.6" fill="#1b8bcb"/><path d="M515 652.4 l2.4 -3.4 M519.4 652.4 l2.4 -3.4 M523.8 652.4 l2.4 -3.4" stroke="#333" stroke-width="1.6"/><rect x="515" y="656.8" width="13.6" height="12.6" rx="1.4" fill="#e4e6ea"/><ellipse cx="519.8" cy="664.4" rx="3" ry="2.2" transform="rotate(-35 519.8 664.4)" fill="none" stroke="#666" stroke-width="1.1"/><ellipse cx="524" cy="661.6" rx="3" ry="2.2" transform="rotate(-35 524 661.6)" fill="none" stroke="#666" stroke-width="1.1"/><path d="M1260.87,663.29 L1262.91,663.41 L1262.91,665.79 L1260.87,665.91 L1260.20,667.54 L1261.55,669.07 L1259.87,670.75 L1258.34,669.40 L1256.71,670.07 L1256.59,672.11 L1254.21,672.11 L1254.09,670.07 L1252.46,669.40 L1250.93,670.75 L1249.25,669.07 L1250.60,667.54 L1249.93,665.91 L1247.89,665.79 L1247.89,663.41 L1249.93,663.29 L1250.60,661.66 L1249.25,660.13 L1250.93,658.45 L1252.46,659.80 L1254.09,659.13 L1254.21,657.09 L1256.59,657.09 L1256.71,659.13 L1258.34,659.80 L1259.87,658.45 L1261.55,660.13 L1260.20,661.66Z M1255.40 662.02 a2.58 2.58 0 1 0 0.01 0Z" fill="#8c8c8c" fill-rule="evenodd"/><rect x="8" y="6.2" width="15.4" height="15.6" rx="0.6" fill="#f6f2ee"/><path d="M12.4 18.8 V8.8 H20.4 V11.8 H15.6 V13 H19.4 V15.8 H15.6 V18.8 Z" fill="#f0922e"/><path d="M12.4 18.8 V8.8 H14 V18.8 Z" fill="#f8b878"/><path d="M15.6 13 H19.4 V15.8 H15.6 Z" fill="#b8601a"/><path d="M1164 14.5 H1174" stroke="#fff" stroke-width="1"/><rect x="1205.5" y="9.5" width="9" height="9" fill="none" stroke="#fff" stroke-width="1"/><path d="M1249 9 L1259 19 M1259 9 L1249 19" stroke="#fff" stroke-width="1.2"/></svg>
<span class="abs nw" style="left:1202.4px;top:618.9px;font-size:10.5px;line-height:13px;color:#333;font-weight:bold;transform-origin:0 50%;transform:scaleX(0.958);">Cara_A v2:1</span>
<div class="abs" style="left:1276px;top:0;width:4px;height:45px;background:#3b4282"></div>
<div class="abs" style="left:1273px;top:30px;width:2px;height:120px;background:#d9e6f4"></div>
<div class="abs" style="left:1275px;top:45px;width:1px;height:105px;background:#6a87a2"></div>
<div class="abs" style="left:1276px;top:45px;width:4px;height:105px;background:#fafdff"></div>
<div class="abs" style="left:1273px;top:518px;width:2px;height:161px;background:#d9e6f4"></div>
<div class="abs" style="left:1275px;top:518px;width:1px;height:161px;background:#6a87a2"></div>
<div class="abs" style="left:1276px;top:518px;width:4px;height:161px;background:#fafdff"></div>
<div class="abs" style="left:1067px;top:150px;width:213px;height:368px;background:#f0f0f0;border:1px solid #cfcfcf;border-right:none;box-shadow:0 1px 3px rgba(0,0,0,0.18)"></div>
<div class="abs" style="left:1068px;top:151px;width:212px;height:22px;background:#f5f5f5;border-bottom:1px solid #dcdcdc"></div>
<div class="abs" style="left:1068px;top:483px;width:212px;height:1px;background:#d4d4d4"></div>
<span class="abs nw" style="left:1091.0px;top:155.6px;font-size:10px;line-height:12px;color:#7a7a7a;transform-origin:0 50%;transform:scaleX(0.933);">MOVER/COPIAR</span>
<span class="abs nw" style="left:1079.5px;top:180.9px;font-size:10.5px;line-height:13px;color:#444;transform-origin:0 50%;transform:scaleX(0.954);">Mover objeto</span>
<span class="abs nw" style="left:1079.5px;top:208.8px;font-size:10.5px;line-height:13px;color:#444;transform-origin:0 50%;transform:scaleX(0.956);">Selección</span>
<span class="abs nw" style="left:1079.5px;top:237.1px;font-size:10.5px;line-height:13px;color:#444;transform-origin:0 50%;transform:scaleX(0.947);">Tipo de desplazamiento</span>
<span class="abs nw" style="left:1079.5px;top:265.3px;font-size:10.5px;line-height:13px;color:#444;transform-origin:0 50%;transform:scaleX(0.960);">Definir punto de giro</span>
<span class="abs nw" style="left:1079.5px;top:293.3px;font-size:10.5px;line-height:13px;color:#444;transform-origin:0 50%;transform:scaleX(0.947);">Distancia X</span>
<span class="abs nw" style="left:1079.5px;top:321.3px;font-size:10.5px;line-height:13px;color:#444;transform-origin:0 50%;transform:scaleX(0.954);">Distancia Y</span>
<span class="abs nw" style="left:1079.5px;top:349.3px;font-size:10.5px;line-height:13px;color:#444;transform-origin:0 50%;transform:scaleX(0.950);">Distancia Z</span>
<span class="abs nw" style="left:1079.5px;top:377.3px;font-size:10.5px;line-height:13px;color:#444;transform-origin:0 50%;transform:scaleX(0.964);">Ángulo X</span>
<span class="abs nw" style="left:1079.5px;top:405.3px;font-size:10.5px;line-height:13px;color:#444;transform-origin:0 50%;transform:scaleX(0.969);">Ángulo Y</span>
<span class="abs nw" style="left:1079.5px;top:433.3px;font-size:10.5px;line-height:13px;color:#444;transform-origin:0 50%;transform:scaleX(0.969);">Ángulo Z</span>
<span class="abs nw" style="left:1079.5px;top:461.3px;font-size:10.5px;line-height:13px;color:#b0b0b0;transform-origin:0 50%;transform:scaleX(0.956);">Crear copia</span>
<div class="abs" style="left:1198px;top:176px;width:82px;height:23px;background:#fff"></div>
<span class="abs nw" style="left:1220.6px;top:180.9px;font-size:10.5px;line-height:13px;color:#333;transform-origin:0 50%;transform:scaleX(0.918);">Componentes</span>
<div class="abs" style="left:1198px;top:203px;width:82px;height:24px;background:#1b8bcb"></div>
<span class="abs nw" style="left:1218.9px;top:208.8px;font-size:10.5px;line-height:13px;color:#fff;transform-origin:0 50%;transform:scaleX(0.958);">1 selecciona.</span>
<div class="abs" style="left:1198px;top:231px;width:21px;height:25px;background:#1b8bcb"></div>
<div class="abs" style="left:1198px;top:288px;width:82px;height:23px;background:#fff;border:1px solid #d2d2d2;border-right:none"></div>
<span class="abs nw" style="left:1201.6px;top:293.3px;font-size:10.5px;line-height:13px;color:#333;transform-origin:0 50%;transform:scaleX(0.921);">0.00 mm</span>
<div class="abs" style="left:1198px;top:316px;width:82px;height:23px;background:#fff;border:1px solid #d2d2d2;border-right:none"></div>
<span class="abs nw" style="left:1201.6px;top:321.3px;font-size:10.5px;line-height:13px;color:#333;transform-origin:0 50%;transform:scaleX(0.921);">0.00 mm</span>
<div class="abs" style="left:1198px;top:344px;width:82px;height:23px;background:#fff;border:1px solid #d2d2d2;border-right:none"></div>
<span class="abs nw" style="left:1201.6px;top:349.3px;font-size:10.5px;line-height:13px;color:#333;transform-origin:0 50%;transform:scaleX(0.921);">0.00 mm</span>
<div class="abs" style="left:1198px;top:372px;width:82px;height:23px;background:#fff;border:1px solid #d2d2d2;border-right:none"></div>
<span class="abs nw" style="left:1201.6px;top:377.3px;font-size:10.5px;line-height:13px;color:#333;transform-origin:0 50%;transform:scaleX(0.953);">0.0 deg</span>
<div class="abs" style="left:1198px;top:400px;width:82px;height:23px;background:#fff;border:1px solid #d2d2d2;border-right:none"></div>
<span class="abs nw" style="left:1201.6px;top:405.3px;font-size:10.5px;line-height:13px;color:#333;transform-origin:0 50%;transform:scaleX(0.953);">0.0 deg</span>
<div class="abs" style="left:1198px;top:428px;width:82px;height:23px;background:#fff;border:1px solid #d2d2d2;border-right:none"></div>
<span class="abs nw" style="left:1201.6px;top:433.3px;font-size:10.5px;line-height:13px;color:#333;transform-origin:0 50%;transform:scaleX(0.953);">0.0 deg</span>
<div class="abs" style="left:1203px;top:462px;width:12px;height:12px;border:1px solid #bdbdbd;border-radius:2px;background:linear-gradient(#f4f4f4,#dedede)"></div>
<div class="abs" style="left:1215px;top:490px;width:57px;height:20px;background:linear-gradient(#4a86c4,#2e65a4);border:1px solid #2a5c98;border-radius:1px"></div>
<span class="abs nw" style="left:1223.6px;top:493.7px;font-size:11px;line-height:13px;color:#fff;transform-origin:0 50%;transform:scaleX(1.029);">Aceptar</span>
<svg style="left:0;top:0" width="1280" height="679" viewBox="0 0 1280 679"><circle cx="1077.2" cy="161.5" r="4.4" fill="#222"/><rect x="1074.6" y="160.8" width="5.2" height="1.5" fill="#f5f5f5"/><circle cx="1081.4" cy="500.2" r="5.6" fill="#111"/><rect x="1080.6" y="499.2" width="1.8" height="4.2" fill="#fff"/><circle cx="1081.5" cy="497.2" r="1.1" fill="#fff"/><path d="M1201.4 183.6 Q1201.4 181 1204 181 L1206 180.2 H1214.6 Q1215.8 180.4 1215.6 182 V191 L1213 194 Q1212.4 194.8 1211 194.8 H1203.4 Q1201.4 194.8 1201.4 192.8 Z" fill="#f4f4f4" stroke="#666" stroke-width="0.9"/><path d="M1202 182.8 H1211 Q1212.6 182.8 1212.6 184.4 V194" fill="none" stroke="#888" stroke-width="0.7"/><rect x="1203.2" y="184.6" width="8" height="8.4" fill="#dcdcdc"/><path d="M1206.6 208.6 V220 L1209.4 217.4 L1211.4 221.6 L1213 220.8 L1211 216.8 L1214.6 216.6 Z" fill="#f0f0f0" stroke="#333" stroke-width="0.6"/><g transform="translate(1208.8 243.6) scale(0.84) translate(-1208.8 -243.6)"><g stroke="#1a1a1a" stroke-width="1.3" fill="none"><path d="M1208.6 246 V236.6 M1208.6 246 L1203.4 249.6 M1208.6 246 L1215.6 246.6"/></g><path d="M1206.6 237.6 L1208.6 234 L1210.6 237.6 Z M1202 248.4 L1202 251.2 L1205 250.6 Z M1214.6 244.8 L1217.6 246.8 L1214.6 248.6 Z" fill="#1a1a1a"/><path d="M1205.4 242.6 L1208.6 240.6 L1211.8 242.6 L1211.8 246 L1208.6 248 L1205.4 246 Z" fill="#8fd0f4" stroke="#1a1a1a" stroke-width="0.6"/></g><g transform="translate(1235.4 243.8) scale(0.84) translate(-1235.4 -243.8)"><g stroke="#222" stroke-width="1.2" fill="none"><path d="M1235.2 245.6 V236.4 M1235.2 245.6 L1229.6 250.2 M1235.2 245.6 L1241.6 246.4"/></g><path d="M1233.2 237.6 L1235.2 234 L1237.2 237.6 Z M1228 248.8 L1228 252 L1231.2 251.2 Z M1240.6 244.4 L1243.8 246.6 L1240.6 248.6 Z" fill="#222"/></g><path d="M1268.6 240.2 A6.2 6.2 0 1 0 1269.4 245.6" fill="none" stroke="#222" stroke-width="1.3"/><path d="M1265.6 238.2 L1270.6 237.4 L1269.6 242.4 Z" fill="#222"/><path d="M1202.4 266 V277.6" stroke="#2a7ac0" stroke-width="1"/><path d="M1202.4 277.6 H1216" stroke="#d84a3a" stroke-width="1"/><path d="M1202.4 277.6 L1210 270" stroke="#5ab45a" stroke-width="1"/><path d="M1209.2 268.4 H1216 M1212.6 265 V271.8" stroke="#222" stroke-width="1.1"/><path d="M1212.6 263.6 l1.4 1.8 h-2.8 Z M1212.6 273.2 l1.4 -1.8 h-2.8 Z M1207.8 268.4 l1.8 -1.4 v2.8 Z M1217.4 268.4 l-1.8 -1.4 v2.8 Z" fill="#222"/></svg>
</body></html>
